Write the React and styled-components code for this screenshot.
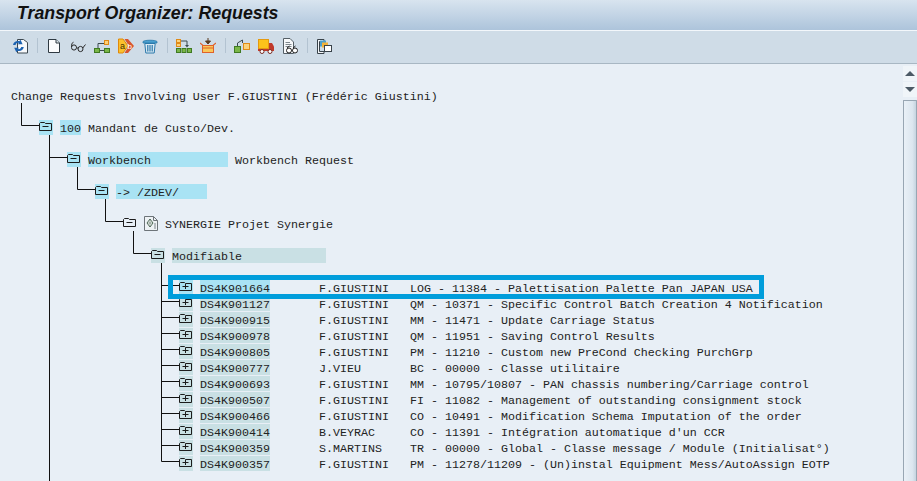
import React from "react";
import styled, { createGlobalStyle } from "styled-components";

const GlobalStyle = createGlobalStyle`
  html, body {
    margin: 0;
    padding: 0;
    height: 100%;
    background: #e8eff6;
    overflow: hidden;
  }
  #root {
    height: 100%;
  }
`;

const Screen = styled.div`
  display: flex;
  flex-direction: column;
  width: 917px;
  height: 481px;
  overflow: hidden;
  background: #e8eff6;
`;

const TitleBar = styled.header`
  display: flex;
  align-items: center;
  height: 27px;
  padding: 0 0 3px 17px;
  background: linear-gradient(#d8e4ef, #adc4db);
  border-bottom: 1px solid #f3f7fb;
`;

const Title = styled.h1`
  margin: 0;
  font: italic bold 17.8px "Liberation Sans", Arial, sans-serif;
  color: #111;
`;

const Toolbar = styled.nav`
  display: flex;
  align-items: center;
  gap: 8px;
  height: 29px;
  padding: 0 0 3px 12px;
  background: #cfdce7;
  border-bottom: 1px solid #a8b7c3;
`;

const ToolIcon = styled.svg`
  display: block;
  flex: none;
  width: 16px;
  height: 16px;
`;

const Divider = styled.span`
  flex: none;
  width: 1px;
  height: 15px;
  margin-left: 1px;
  background: #b3c3d1;
`;

const Content = styled.main`
  display: flex;
  flex: 1;
  min-height: 0;
`;

const TreePane = styled.section`
  position: relative;
  flex: 1;
  padding-top: 24px;
  font: 11.67px/15px "Liberation Mono", "Courier New", monospace;
  color: #222;
`;

const Connectors = styled.svg`
  position: absolute;
  left: 0;
  top: -64px;
  pointer-events: none;
`;

const TreeRow = styled.div`
  display: flex;
  height: 15px;
  padding-left: ${(p) => p.$indent}px;
  margin-bottom: ${(p) => (p.$spaced ? 17 : 1)}px;
  white-space: pre;
`;

const NodeBox = styled.span`
  display: flex;
  flex: none;
  justify-content: center;
  width: 14px;
  height: 15px;
  margin-right: 7px;
  background: ${(p) => p.$tone || "transparent"};
`;

const Cell = styled.span`
  flex: none;
  box-sizing: border-box;
  width: ${(p) => (p.$chars ? p.$chars * 7 + "px" : "auto")};
  padding-top: 2px;
  margin-right: ${(p) => (p.$after ? p.$after * 7 : 0)}px;
  background: ${(p) => p.$tone || "transparent"};
`;

const Highlight = styled.div`
  position: absolute;
  left: 168px;
  top: 211px;
  width: 596px;
  height: 24px;
  box-sizing: border-box;
  border: 5px solid #009ddb;
  pointer-events: none;
`;

const Scrollbar = styled.aside`
  display: flex;
  flex: none;
  flex-direction: column;
  align-items: stretch;
  width: 14px;
  padding-top: 2px;
`;

const ScrollButton = styled.div`
  display: flex;
  align-items: center;
  justify-content: center;
  height: 15px;
  margin-bottom: 1px;
  background: #f0f5f9;

  &::before {
    content: "";
    border-left: 5px solid transparent;
    border-right: 5px solid transparent;
    ${(p) => (p.$up ? "border-bottom" : "border-top")}: 5px solid #4c5a66;
  }
`;

const ScrollThumb = styled.div`
  flex: 1;
  margin-top: 2px;
  box-sizing: border-box;
  border: 1px solid #98a6b3;
  border-bottom: 0;
  border-radius: 1px 1px 0 0;
  background: linear-gradient(90deg, #e9f0f7, #dce6ef 70%, #c6d4e0);
`;

const CYAN = "#a9e3f4";
const DULL = "#c9e0e4";

function FolderIcon({ open }) {
  return (
    <svg width="14" height="15" viewBox="0 0 14 15">
      <path
        d="M.5 10.5V3.5L1.5 2.5H5.5L6.5 3.5H12.5V10.5Z"
        fill="none"
        stroke="#1c1c1c"
      />
      <path d="M3.5 6.5H9.5" stroke="#1c1c1c" />
      {!open && <path d="M6.5 4V9" stroke="#1c1c1c" />}
    </svg>
  );
}

function ProjectIcon() {
  return (
    <svg width="14" height="15" viewBox="0 0 14 15">
      <path d="M.5.5H9.5L13.5 4.5V14.5H.5Z" fill="#eef2f5" stroke="#6d7479" />
      <path d="M9.5 .5V4.5H13.5" fill="none" stroke="#6d7479" />
      <path d="M6 3L9 7L6 11L3 7Z" fill="#fff" stroke="#4f6a57" />
      <path d="M6 3V11M3 7H9" stroke="#4f6a57" strokeWidth=".6" />
      <path d="M10 8H12M10 10H12M10 12H12" stroke="#7d858a" />
    </svg>
  );
}

function RefreshIcon() {
  return (
    <ToolIcon viewBox="0 0 16 16">
      <path d="M5.5 1.5H11.5L15.5 4.5V15H5.5Z" fill="#f7f9fb" stroke="#3d4850" />
      <path d="M1 7C1.5 3.8 4.5 2.6 7.2 3.2L8.5 1.8L10.6 6.2H5.7L6.9 5C5.2 4.5 4 5.4 3.6 7Z" fill="#1c62b0" />
      <path d="M11.8 9C11.3 12.2 8.3 13.5 5.6 12.8L4.3 14.2L2.2 9.8H7.1L5.9 11C7.6 11.5 8.8 10.6 9.2 9Z" fill="#1c62b0" />
    </ToolIcon>
  );
}

function NewPageIcon() {
  return (
    <ToolIcon viewBox="0 0 16 16">
      <path d="M2.5 1.5H10L13.5 5V14.5H2.5Z" fill="#fbfcfd" stroke="#2f3a42" />
      <path d="M10 1.5V5H13.5" fill="#dfe5ea" stroke="#2f3a42" />
    </ToolIcon>
  );
}

function GlassesIcon() {
  return (
    <ToolIcon viewBox="0 0 16 16">
      <g fill="none" stroke="#2a2a2a">
        <ellipse cx="4" cy="9.5" rx="2.5" ry="2.6" />
        <ellipse cx="10.5" cy="11" rx="2.5" ry="2.6" />
        <path d="M6.5 9.5L8 10.3M1.5 9C1.5 6.5 2 4.5 3.5 4.2M12.8 10C14 8.5 14.5 7.5 15.5 6.5" />
      </g>
    </ToolIcon>
  );
}

function HierarchyIcon() {
  return (
    <ToolIcon viewBox="0 0 16 16">
      <path d="M4 10V5.5H10M4 12.5H11" fill="none" stroke="#3c4a4e" />
      <rect x="10.5" y="2.5" width="4" height="4" fill="#fbd27a" stroke="#e08a16" />
      <rect x=".5" y="10.5" width="5" height="4" fill="#7ab648" stroke="#3f7a22" />
      <rect x="10.5" y="10.5" width="5" height="4" fill="#7ab648" stroke="#3f7a22" />
    </ToolIcon>
  );
}

function CompareIcon() {
  return (
    <ToolIcon viewBox="0 0 16 16">
      <path d="M.5 1H5L10 8L5 15H.5Z" fill="#fbc02d" stroke="#e08a0a" />
      <path d="M6.5 1H10L16 8L10 15H6.5L11 8Z" fill="#d9552d" />
      <text x="2" y="11" fontFamily="Liberation Sans, sans-serif" fontSize="9" fill="#3a3000">a</text>
      <text x="9.4" y="10.5" fontFamily="Liberation Sans, sans-serif" fontSize="8" fill="#fff">b</text>
    </ToolIcon>
  );
}

function TrashIcon() {
  return (
    <ToolIcon viewBox="0 0 16 16">
      <path d="M1 3.5C3 1.8 13 1.8 15 3.5V5H1Z" fill="#4aa0d0" stroke="#2a78aa" strokeWidth=".8" />
      <path d="M2.8 5.5H13.2L12.2 15H3.8Z" fill="#dbeaf3" stroke="#2a78aa" />
      <path d="M5.8 7V13.5M8 7V13.5M10.2 7V13.5" stroke="#2a78aa" strokeWidth="1.2" />
    </ToolIcon>
  );
}

function MoveDownIcon() {
  return (
    <ToolIcon viewBox="0 0 16 16">
      <rect x=".5" y="1.5" width="4" height="3" fill="#fbd27a" stroke="#e08a16" />
      <rect x=".5" y="5.5" width="4" height="3" fill="#fbd27a" stroke="#e08a16" />
      <path d="M5 3H11V8" fill="none" stroke="#3c4a4e" />
      <path d="M9 7H13L11 9.5Z" fill="#3c4a4e" />
      <g fill="#7ab648" stroke="#3f7a22">
        <rect x=".5" y="10.5" width="4" height="4" />
        <rect x="6" y="10.5" width="4" height="4" />
        <rect x="11.5" y="10.5" width="4" height="4" />
      </g>
    </ToolIcon>
  );
}

function BoxIcon() {
  return (
    <ToolIcon viewBox="0 0 16 16">
      <path d="M8 0V3M5.5 3H10.5L8 6Z" fill="#5a3a20" stroke="#5a3a20" />
      <path d="M0 5L3 7.5H13L16 5" fill="none" stroke="#e0622a" strokeWidth="1.2" />
      <rect x="2.5" y="7.5" width="11" height="7" fill="#f9c85a" stroke="#e0622a" />
      <path d="M3 10H13" stroke="#e0622a" />
    </ToolIcon>
  );
}

function TransferIcon() {
  return (
    <ToolIcon viewBox="0 0 16 16">
      <rect x=".5" y="8.5" width="6" height="6" fill="#7ab648" stroke="#3f7a22" />
      <rect x="9.5" y="5.5" width="6" height="6" fill="#fbd27a" stroke="#e08a16" />
      <path d="M3.5 8V5L8.5 2V5" fill="none" stroke="#3c4a4e" />
    </ToolIcon>
  );
}

function TruckIcon() {
  return (
    <ToolIcon viewBox="0 0 16 16">
      <rect x=".5" y="1.5" width="10" height="9" fill="#fcc21b" stroke="#e59a10" />
      <path d="M11 5H14L16 8.5V12H11Z" fill="#c0392b" />
      <path d="M0 11H16V13H0Z" fill="#c0392b" />
      <circle cx="4" cy="13.5" r="2" fill="#fff" stroke="#7a2a20" />
      <circle cx="12" cy="13.5" r="2" fill="#fff" stroke="#7a2a20" />
    </ToolIcon>
  );
}

function DocGlassesIcon() {
  return (
    <ToolIcon viewBox="0 0 16 16">
      <path d="M1.5 .5H8L11.5 4V15.5H1.5Z" fill="#f7f9fb" stroke="#555f66" />
      <path d="M3.5 4.5H8M3.5 6.5H9.5M3.5 8.5H9.5" stroke="#7d868c" />
      <circle cx="7" cy="12.5" r="2.5" fill="#fff" stroke="#222" />
      <circle cx="13" cy="12.5" r="2.5" fill="#fff" stroke="#222" />
      <path d="M9.5 12.5H10.5M5 10L7.5 8M11 10L13.5 8" stroke="#222" />
    </ToolIcon>
  );
}

function WindowsIcon() {
  return (
    <ToolIcon viewBox="0 0 16 16">
      <path d="M1.5 1.5H8V3.5H3.5V13.5H8V15.5H1.5Z" fill="#f3f6f9" stroke="#39434a" />
      <rect x="4" y="2.5" width="6" height="6" fill="#4aa0d0" />
      <rect x="6" y="4.5" width="6" height="5" fill="#f2b23a" />
      <rect x="8.5" y="7.5" width="7" height="6" fill="#fff" stroke="#39434a" />
    </ToolIcon>
  );
}

const toolGroups = [
  [RefreshIcon],
  [NewPageIcon, GlassesIcon, HierarchyIcon, CompareIcon, TrashIcon],
  [MoveDownIcon, BoxIcon],
  [TransferIcon, TruckIcon, DocGlassesIcon],
  [WindowsIcon],
];

const requests = [
  ["DS4K901664", "F.GIUSTINI", "LOG - 11384 - Palettisation Palette Pan JAPAN USA"],
  ["DS4K901127", "F.GIUSTINI", "QM - 10371 - Specific Control Batch Creation 4 Notification"],
  ["DS4K900915", "F.GIUSTINI", "MM - 11471 - Update Carriage Status"],
  ["DS4K900978", "F.GIUSTINI", "QM - 11951 - Saving Control Results"],
  ["DS4K900805", "F.GIUSTINI", "PM - 11210 - Custom new PreCond Checking PurchGrp"],
  ["DS4K900777", "J.VIEU", "BC - 00000 - Classe utilitaire"],
  ["DS4K900693", "F.GIUSTINI", "MM - 10795/10807 - PAN chassis numbering/Carriage control"],
  ["DS4K900507", "F.GIUSTINI", "FI - 11082 - Management of outstanding consignment stock"],
  ["DS4K900466", "F.GIUSTINI", "CO - 10491 - Modification Schema Imputation of the order"],
  ["DS4K900414", "B.VEYRAC", "CO - 11391 - Intégration automatique d'un CCR"],
  ["DS4K900359", "S.MARTINS", "TR - 00000 - Global - Classe message / Module (Initialisat°)"],
  ["DS4K900357", "F.GIUSTINI", "PM - 11278/11209 - (Un)instal Equipment Mess/AutoAssign EOTP"],
];

// tree lines, in page coordinates
function treeLines() {
  let d = "M21.5 103V125.5H39M49.5 135V481M49.5 157.5H67M77.5 167V189.5H95M105.5 199V221.5H123M133.5 231V253.5H151M161.5 263V461.5";
  requests.forEach((r, i) => {
    d += `M161.5 ${285.5 + i * 16}H179`;
  });
  return d;
}

export default function App() {
  return (
    <Screen>
      <GlobalStyle />
      <TitleBar>
        <Title>Transport Organizer: Requests</Title>
      </TitleBar>
      <Toolbar>
        {toolGroups.map((group, i) => (
          <React.Fragment key={i}>
            {i > 0 && <Divider />}
            {group.map((Icon, j) => (
              <Icon key={j} />
            ))}
          </React.Fragment>
        ))}
      </Toolbar>
      <Content>
        <TreePane>
          <TreeRow $indent={11} $spaced>
            <Cell>Change Requests Involving User F.GIUSTINI (Frédéric Giustini)</Cell>
          </TreeRow>
          <TreeRow $indent={39} $spaced>
            <NodeBox $tone={CYAN}><FolderIcon open /></NodeBox>
            <Cell $chars={3} $tone={CYAN} $after={1}>100</Cell>
            <Cell>Mandant de Custo/Dev.</Cell>
          </TreeRow>
          <TreeRow $indent={67} $spaced>
            <NodeBox $tone={CYAN}><FolderIcon open /></NodeBox>
            <Cell $chars={20} $tone={CYAN} $after={1}>Workbench</Cell>
            <Cell>Workbench Request</Cell>
          </TreeRow>
          <TreeRow $indent={95} $spaced>
            <NodeBox $tone={CYAN}><FolderIcon open /></NodeBox>
            <Cell $chars={13} $tone={CYAN}>-&gt; /ZDEV/</Cell>
          </TreeRow>
          <TreeRow $indent={123} $spaced>
            <NodeBox><FolderIcon open /></NodeBox>
            <NodeBox><ProjectIcon /></NodeBox>
            <Cell>SYNERGIE Projet Synergie</Cell>
          </TreeRow>
          <TreeRow $indent={151} $spaced>
            <NodeBox $tone={DULL}><FolderIcon open /></NodeBox>
            <Cell $chars={22} $tone={DULL}>Modifiable</Cell>
          </TreeRow>
          {requests.map(([id, owner, text], i) => (
            <TreeRow key={id} $indent={179}>
              <NodeBox $tone={i === 0 ? CYAN : DULL}><FolderIcon /></NodeBox>
              <Cell $chars={10} $tone={i === 0 ? CYAN : DULL} $after={7}>{id}</Cell>
              <Cell $chars={10} $after={3}>{owner}</Cell>
              <Cell>{text}</Cell>
            </TreeRow>
          ))}
          <Connectors width="903" height="481" viewBox="0 0 903 481">
            <path d={treeLines()} fill="none" stroke="#111" />
          </Connectors>
          <Highlight />
        </TreePane>
        <Scrollbar>
          <ScrollButton $up />
          <ScrollButton />
          <ScrollThumb />
        </Scrollbar>
      </Content>
    </Screen>
  );
}
